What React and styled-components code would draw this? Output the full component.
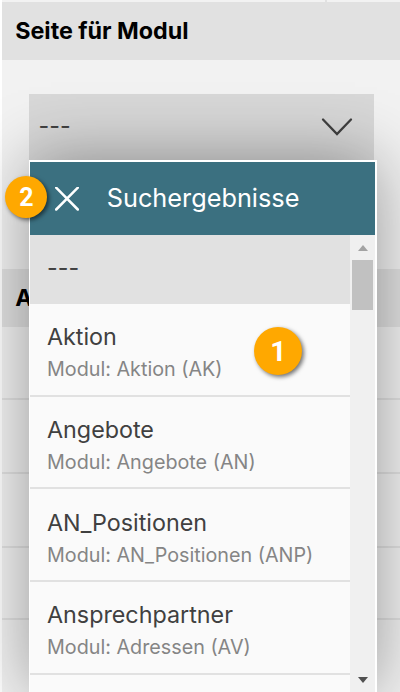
import React from 'react';
import styled, { createGlobalStyle } from 'styled-components';

const Global = createGlobalStyle`
  * { box-sizing: border-box; }
  body { margin: 0; background: #fff; overflow: hidden; font-family: Inter, sans-serif; }
`;
const Page = styled.main`
  position: relative; width: 400px; height: 692px; overflow: hidden;
  padding-left: 2px; background: #fff;
`;
const Content = styled.div`height: 692px; background: #f2f2f2;`;
const TopRow = styled.div`
  height: 2px; display: flex;
  &::after { content: ''; width: 2px; margin-left: 323px; background: #e1e1e1; }
`;
const SectionHeader = styled.h2`
  margin: 0; height: 58px; padding-left: 13.2px; background: #e1e1e1;
  font-size: 23.3px; line-height: 58px; font-weight: 700; color: #000; white-space: nowrap;
`;
const Field = styled.div`height: 209px; padding: 34px 26px 0 27px;`;
const Select = styled.div`
  height: 74px; background: #d8d8d8; display: flex; justify-content: space-between;
  padding: 23px 21px 0 9.6px;
`;
const Line = styled.div`height: ${p => p.$h}px; border-bottom: 2px solid #e1e1e1;`;
const Placeholder = styled.span`
  display: block; color: #404040; font-size: 23.25px; line-height: 28px; height: 28px;
  margin-top: ${p => p.$shift || 0}px;
`;
const Popup = styled.section`
  position: absolute; left: 29px; top: 160px; width: 348px; height: 532px;
  border: solid #fff; border-width: 2px 2px 0 1px; background: #fafafa;
  box-shadow: 0 0 64px rgba(0,0,0,.38);
`;
const TitleBar = styled.header`
  height: 73px; background: #3b7080; color: #fff; display: flex; align-items: center;
  padding-left: 25px; gap: 27.7px; font-size: 25.3px; line-height: 30px;
`;
const Title = styled.span`margin-top: -1px;`;
const Results = styled.div`height: 457px; display: flex; overflow: hidden;`;
const List = styled.div`width: 320px; flex: none;`;
const EmptyItem = styled.div`height: 68.9px; background: #e1e1e1; padding: 19px 0 0 17px;`;
const Item = styled.div`
  height: 92.7px; padding: 18.5px 0 0 17px; border-bottom: 2px solid #e1e1e1; white-space: nowrap;
`;
const Name = styled.div`font-size: 23.3px; line-height: 29px; color: #404040;`;
const Detail = styled.div`font-size: 19.75px; line-height: 24px; margin-top: 6px; color: #858585;`;
const Scrollbar = styled.div`
  width: 25px; background: #f0f0f0; display: flex; flex-direction: column; align-items: center;
  padding: 10px 0 9px;
`;
const Thumb = styled.div`width: 21px; height: 50px; background: #c1c1c1; margin-top: 9px;`;
const Arrow = styled.div`
  width: 0; height: 0; border: solid transparent; border-width: 0 5.5px;
  ${p => p.$down ? 'margin-top: auto; border-top: 6px solid #505050;' : 'border-bottom: 6px solid #a3a3a3;'}
`;
const Badge = styled.div`
  position: absolute; left: ${p => p.$x}px; top: ${p => p.$y}px; width: ${p => p.$size}px; height: ${p => p.$size}px;
  border-radius: 50%; background: #ffa800; color: #fff; display: flex; align-items: center; justify-content: center;
  font: 700 ${p => p.$font}px Roboto, sans-serif; box-shadow: 2px 2px 4px rgba(0,0,0,.55);
`;
const items = [
  ['Aktion', 'Modul: Aktion (AK)'],
  ['Angebote', 'Modul: Angebote (AN)'],
  ['AN_Positionen', 'Modul: AN_Positionen (ANP)'],
  ['Ansprechpartner', 'Modul: Adressen (AV)'],
];

export default function App() {
  return (
    <Page>
      <Global />
      <Content>
        <TopRow />
        <SectionHeader>Seite für Modul</SectionHeader>
        <Field>
          <Select>
            <Placeholder $shift={-5}>---</Placeholder>
            <svg width="32" height="20" viewBox="0 0 32 20" fill="none" stroke="#404040" strokeWidth="2.3" strokeLinecap="round"><path d="M2 2.5L16 17L30 2.5" /></svg>
          </Select>
        </Field>
        <SectionHeader>A</SectionHeader>
        <Line $h={73} /><Line $h={74} /><Line $h={74} /><Line $h={72} />
      </Content>
      <Popup>
        <TitleBar>
          <svg width="24" height="24" viewBox="0 0 24 24" fill="none" stroke="#fff" strokeWidth="2.5" strokeLinecap="round"><path d="M1.2 0.7L22.8 22.5M22.8 0.7L1.2 22.5" /></svg>
          <Title>Suchergebnisse</Title>
        </TitleBar>
        <Results>
          <List>
            <EmptyItem><Placeholder>---</Placeholder></EmptyItem>
            {items.map(([name, detail]) => <Item key={name}><Name>{name}</Name><Detail>{detail}</Detail></Item>)}
          </List>
          <Scrollbar><Arrow /><Thumb /><Arrow $down /></Scrollbar>
        </Results>
      </Popup>
      <Badge $x={5.3} $y={176} $size={42} $font={25}>2</Badge>
      <Badge $x={254.4} $y={327.4} $size={48} $font={28}>1</Badge>
    </Page>
  );
}
